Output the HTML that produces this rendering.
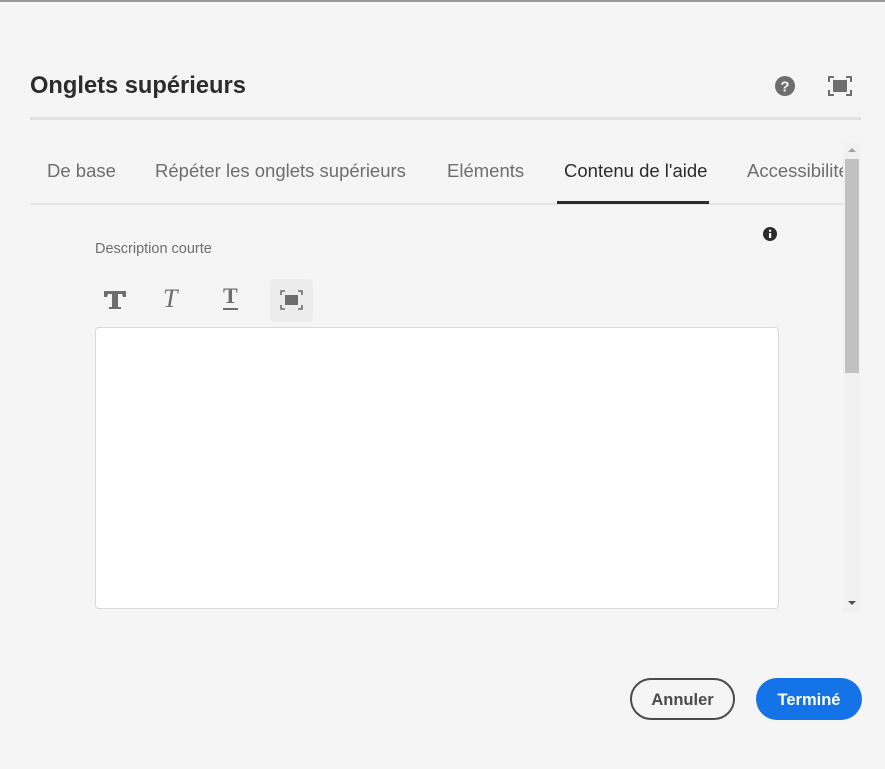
<!DOCTYPE html>
<html><head><meta charset="utf-8"><style>
*{box-sizing:border-box;margin:0;padding:0}
body{width:885px;height:769px;background:#f5f5f5;font-family:"Liberation Sans",sans-serif;position:relative;overflow:hidden}
.a{position:absolute}
.tab{position:absolute;top:160px;font-size:18.5px;color:#6e6e6e;white-space:nowrap}
</style></head><body>
<div class="a" style="left:0;top:0;width:885px;height:2px;background:#9a9a9a"></div>
<div class="a" style="left:30px;top:73px;font-size:23.7px;font-weight:bold;color:#2c2c2c">Onglets supérieurs</div>
<svg class="a" style="left:774px;top:75px" width="22" height="22" viewBox="0 0 22 22"><circle cx="11" cy="11" r="10" fill="#6e6e6e"/><text x="11" y="16.5" font-size="15" font-weight="bold" fill="#f5f5f5" text-anchor="middle" font-family="Liberation Sans">?</text></svg>
<svg class="a" style="left:828px;top:76px" width="24" height="20" viewBox="0 0 24 20"><path d="M1 6V1h5M18 1h5v5M23 14v5h-5M6 19H1v-5" fill="none" stroke="#6e6e6e" stroke-width="2"/><rect x="5" y="4" width="14" height="12" fill="#6e6e6e"/></svg>
<div class="a" style="left:30px;top:117px;width:831px;height:3px;background:#e1e1e1"></div>
<div class="a" style="left:30px;top:203px;width:813px;height:2px;background:#e4e4e4"></div>
<div class="tab" style="left:47px">De base</div>
<div class="tab" style="left:155px">Répéter les onglets supérieurs</div>
<div class="tab" style="left:447px">Eléments</div>
<div class="tab" style="left:564px;color:#2c2c2c">Contenu de l'aide</div>
<div class="tab" style="left:747px;width:96px;overflow:hidden">Accessibilité</div>
<div class="a" style="left:557px;top:201px;width:152px;height:3px;background:#2c2c2c"></div>
<div class="a" style="left:843px;top:143px;width:17px;height:469px;background:#f1f1f1"></div>
<div class="a" style="left:845px;top:159px;width:14px;height:214px;background:#c1c1c1"></div>
<div class="a" style="left:848px;top:148px;width:0;height:0;border-left:4px solid transparent;border-right:4px solid transparent;border-bottom:4px solid #a3a3a3"></div>
<div class="a" style="left:848px;top:601px;width:0;height:0;border-left:4px solid transparent;border-right:4px solid transparent;border-top:4px solid #505050"></div>
<div class="a" style="left:95px;top:241px;font-size:14.5px;color:#6e6e6e">Description courte</div>
<svg class="a" style="left:763px;top:227px" width="14" height="14" viewBox="0 0 14 14"><circle cx="7" cy="7" r="7" fill="#2c2c2c"/><rect x="6" y="6" width="2.2" height="5" fill="#fff"/><circle cx="7.1" cy="3.8" r="1.2" fill="#fff"/></svg>
<svg class="a" style="left:103px;top:290px" width="24" height="20" viewBox="0 0 24 20"><path d="M1 1h22v6h-3l-1-3h-4v13h3v2H6v-2h3V4H5L4 7H1z" fill="#6e6e6e"/></svg>
<div class="a" style="left:163px;top:284px;font:italic 26px 'Liberation Serif',serif;color:#6e6e6e">T</div>
<div class="a" style="left:223px;top:284px;font:bold 22px 'Liberation Serif',serif;color:#6e6e6e;border-bottom:2px solid #6e6e6e;line-height:24px">T</div>
<div class="a" style="left:270px;top:279px;width:43px;height:43px;background:#ececec;border-radius:4px"></div>
<svg class="a" style="left:280px;top:290px" width="23" height="20" viewBox="0 0 23 20"><path d="M1 5V1h4M18 1h4v4M22 15v4h-4M5 19H1v-4" fill="none" stroke="#6e6e6e" stroke-width="1.6"/><rect x="5" y="5" width="13" height="10" fill="#6e6e6e"/></svg>
<div class="a" style="left:95px;top:327px;width:684px;height:282px;background:#fff;border:1px solid #d9d9d9;border-radius:4px"></div>
<div class="a" style="left:630px;top:678px;width:105px;height:42px;border:2px solid #4b4b4b;border-radius:21px;font-size:16.5px;font-weight:bold;color:#4b4b4b;text-align:center;line-height:41px">Annuler</div>
<div class="a" style="left:756px;top:678px;width:106px;height:42px;background:#1473e6;border-radius:21px;font-size:16.5px;font-weight:bold;color:#fff;text-align:center;line-height:45px">Terminé</div>
</body></html>
